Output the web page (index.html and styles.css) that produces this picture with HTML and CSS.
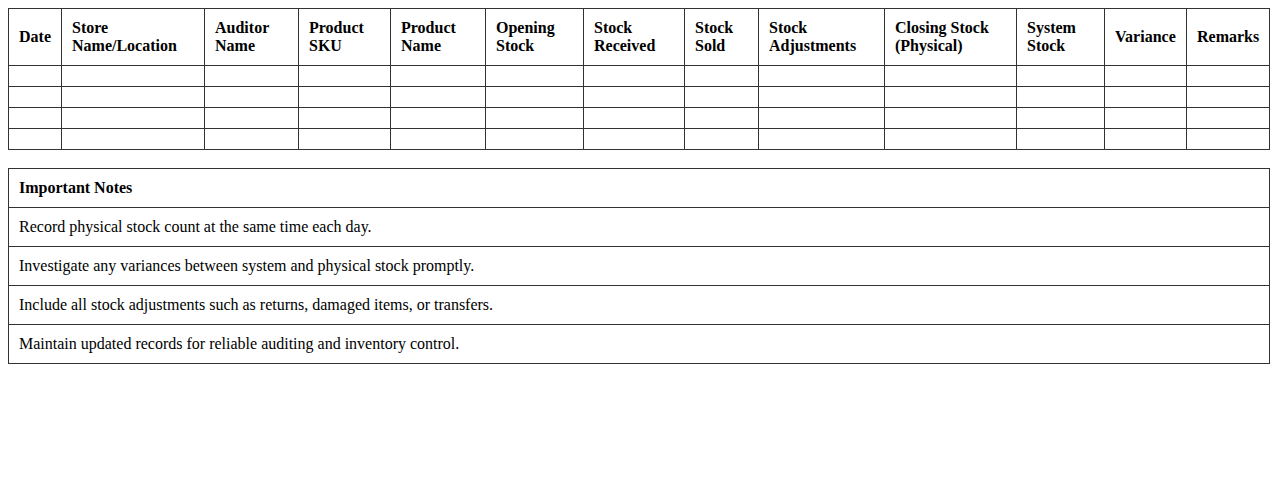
FILE: index.html
```html
<!DOCTYPE html>
<html>
<head>
<meta charset="utf-8">
<link rel="stylesheet" href="styles.css">
</head>
<body>
<table class="grid log">
  <colgroup>
    <col class="c-date">
    <col class="c-store">
    <col class="c-auditor">
    <col class="c-sku">
    <col class="c-name">
    <col class="c-open">
    <col class="c-recv">
    <col class="c-sold">
    <col class="c-adj">
    <col class="c-close">
    <col class="c-sys">
    <col class="c-var">
    <col class="c-rem">
  </colgroup>
  <thead>
    <tr>
      <th>Date</th>
      <th>Store<br>Name/Location</th>
      <th>Auditor<br>Name</th>
      <th>Product<br>SKU</th>
      <th>Product<br>Name</th>
      <th>Opening<br>Stock</th>
      <th>Stock<br>Received</th>
      <th>Stock<br>Sold</th>
      <th>Stock<br>Adjustments</th>
      <th>Closing Stock<br>(Physical)</th>
      <th>System<br>Stock</th>
      <th>Variance</th>
      <th>Remarks</th>
    </tr>
  </thead>
  <tbody>
    <tr><td></td><td></td><td></td><td></td><td></td><td></td><td></td><td></td><td></td><td></td><td></td><td></td><td></td></tr>
    <tr><td></td><td></td><td></td><td></td><td></td><td></td><td></td><td></td><td></td><td></td><td></td><td></td><td></td></tr>
    <tr><td></td><td></td><td></td><td></td><td></td><td></td><td></td><td></td><td></td><td></td><td></td><td></td><td></td></tr>
    <tr><td></td><td></td><td></td><td></td><td></td><td></td><td></td><td></td><td></td><td></td><td></td><td></td><td></td></tr>
  </tbody>
</table>
<table class="grid notes">
  <tr><th>Important Notes</th></tr>
  <tr><td>Record physical stock count at the same time each day.</td></tr>
  <tr><td>Investigate any variances between system and physical stock promptly.</td></tr>
  <tr><td>Include all stock adjustments such as returns, damaged items, or transfers.</td></tr>
  <tr><td>Maintain updated records for reliable auditing and inventory control.</td></tr>
</table>
</body>
</html>
```
FILE: styles.css
```css
body {
  margin: 8px;
  font-family: "Liberation Serif", "Times New Roman", serif;
  font-size: 16px;
  color: #000;
  background: #fff;
}
.grid {
  width: 100%;
  border-collapse: collapse;
  margin-bottom: 18px;
}
.log {
  table-layout: fixed;
}
.grid th,
.grid td {
  border: 1px solid #333;
  padding: 10px;
  text-align: left;
  vertical-align: middle;
}
.grid th {
  font-weight: bold;
}
.c-date { width: 53px; }
.c-store { width: 143px; }
.c-auditor { width: 94px; }
.c-sku { width: 92px; }
.c-name { width: 95px; }
.c-open { width: 98px; }
.c-recv { width: 101px; }
.c-sold { width: 74px; }
.c-adj { width: 126px; }
.c-close { width: 132px; }
.c-sys { width: 88px; }
.c-var { width: 82px; }
.c-rem { width: 83px; }
```
